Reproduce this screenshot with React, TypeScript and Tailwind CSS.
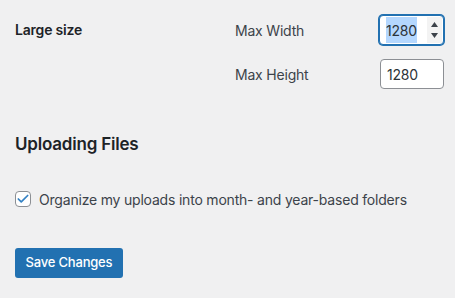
import { Check } from 'lucide-react';

const font = { fontFamily: 'Inter, "Noto Sans", sans-serif', letterSpacing: '-0.2px' };

const NumberField = ({ value, focused }: { value: string; focused?: boolean }) => (
  <div
    className={
      focused
        ? 'flex h-[30px] w-[65px] shrink-0 items-stretch rounded-[4px] border border-[#2271b1] bg-white shadow-[0_0_0_1px_#2271b1]'
        : 'flex h-[30px] w-[64px] shrink-0 items-center rounded-[4px] border border-[#8c8f94] bg-white'
    }
  >
    {focused ? (
      <>
        <div className="flex flex-1 items-stretch pl-[6px] py-[1px]">
          <span className="flex items-center bg-[#b4d7fe] text-[14px] text-[#2c3338]">{value}</span>
          <span className="flex-1 bg-white" />
        </div>
        <div className="my-[1px] mr-[1px] flex w-[15px] flex-col items-center justify-center gap-[6px] bg-[#f3f3f3]">
          <svg width="7" height="5" viewBox="0 0 7 5"><path d="M3.5 0L7 5H0z" fill="#3c434a" /></svg>
          <svg width="7" height="5" viewBox="0 0 7 5"><path d="M0 0h7L3.5 5z" fill="#3c434a" /></svg>
        </div>
      </>
    ) : (
      <span className="pl-[6px] text-[14px] text-[#2c3338]">{value}</span>
    )}
  </div>
);

const App = () => {
  return (
    <div className="min-h-screen w-[455px] overflow-hidden bg-[#f0f0f1] text-[#3c434a]" style={font}>
      <div className="flex pl-[15px] pt-[15px]">
        <div className="w-[220px] shrink-0 pt-[4px] text-[14px] font-semibold text-[#1d2327]">Large size</div>
        <div className="flex shrink-0 flex-col gap-[14px]">
          <div className="flex items-center">
            <label className="w-[144px] shrink-0 text-[14px]">Max Width</label>
            <NumberField value="1280" focused />
          </div>
          <div className="flex items-center">
            <label className="w-[145px] shrink-0 text-[14px]">Max Height</label>
            <NumberField value="1280" />
          </div>
        </div>
      </div>

      <h2 className="mt-[43px] px-[15px] text-[17px] font-semibold text-[#1d2327]">Uploading Files</h2>

      <label className="mt-[31px] flex items-center gap-[8px] px-[15px] text-[14px]">
        <span className="flex h-[16px] w-[16px] items-center justify-center rounded-[4px] border border-[#8c8f94] bg-white">
          <Check className="h-[14px] w-[14px] text-[#3582c4]" strokeWidth={3} />
        </span>
        Organize my uploads into month- and year-based folders
      </label>

      <div className="mt-[38px] px-[15px]">
        <button className="h-[30px] w-[108px] rounded-[3px] bg-[#2271b1] text-[13px] font-medium text-white">
          Save Changes
        </button>
      </div>
    </div>
  );
};

export default App;
